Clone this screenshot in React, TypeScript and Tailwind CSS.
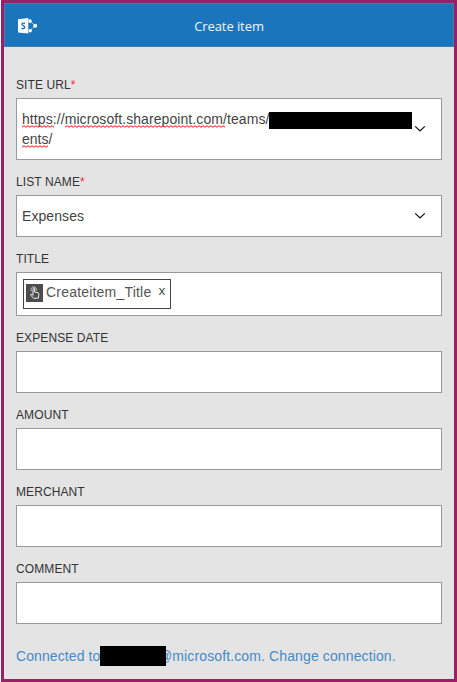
import type { ReactNode } from "react";

function SharePointIcon() {
  return (
    <svg width="20" height="16" viewBox="0 0 20 16" className="mt-px block">
      <path d="M11 2.6 L17.3 7.8 L11.5 13" fill="none" stroke="#fff" strokeWidth="1" strokeOpacity="0.8" strokeDasharray="2.2 0.8" />
      <circle cx="12" cy="3.1" r="1.8" fill="#fff" />
      <circle cx="17.2" cy="7.8" r="2" fill="#fff" />
      <circle cx="12.2" cy="12.7" r="1.7" fill="#fff" />
      <path d="M0 1.2 L10.3 0 V15.6 L0 14.4 Z" fill="#fff" />
      <path d="M7 5.5 C5.6 4.8 3.9 5 3.9 6.3 C3.9 7.8 6.8 7.6 6.8 9.3 C6.8 10.7 4.7 10.9 3.5 10.1" fill="none" stroke="#1b75bc" strokeWidth="1.4" />
    </svg>
  );
}

function Chevron() {
  return (
    <svg width="12" height="8" viewBox="0 0 12 8" className="block shrink-0">
      <path d="M1.2 1.4 L6 5.9 L10.8 1.4" fill="none" stroke="#111" strokeWidth="1.3" />
    </svg>
  );
}

function TapIcon() {
  return (
    <svg width="17" height="18" viewBox="0 0 17 18" className="mt-[-2px] block shrink-0 bg-[#4b4d4d]">
      <g fill="none" stroke="#fff" strokeWidth="0.9" strokeLinejoin="round" strokeLinecap="round">
        <path d="M7 11 V5 C7 3.9 8.6 3.9 8.6 5 V8 L12 8.8 C12.8 9 13 9.5 12.9 10.2 L12.3 14.2 H7.7 L4.6 11.2 C4.2 10.5 5 9.9 5.7 10.3 Z" />
        <path d="M5.3 6.8 C4.2 4.9 5.7 2.9 7.8 2.9 C9.7 2.9 11 4.8 10.2 6.5" strokeWidth="0.7" />
      </g>
    </svg>
  );
}

function Spell({ children, width }: { children: ReactNode; width: number }) {
  const points = Array.from({ length: Math.floor(width / 2) + 1 }, (_, i) => `${i * 2},${i % 2 ? 0.7 : 2.3}`).join(" ");
  return (
    <span className="relative inline-block">
      {children}
      <svg className="absolute left-0 top-[16px]" width={width} height="3">
        <polyline points={points} fill="none" stroke="#ee1010" strokeWidth="1" />
      </svg>
    </span>
  );
}

function Field({ label, required, className = "h-[42px]", children }: { label: string; required?: boolean; className?: string; children?: ReactNode }) {
  return (
    <div>
      <div className="h-[35px] pt-3 text-[12px] leading-5 tracking-[0.1px] text-[#333]">
        {label}
        {required && <span className="text-[#ff1f44]">*</span>}
      </div>
      <div className={`flex items-center justify-between border border-[#999] bg-white pl-[5px] text-[14px] leading-5 text-[#444] ${className}`}>{children}</div>
    </div>
  );
}

export default function App() {
  return (
    <div className="h-[682px] w-[457px] bg-white pl-px font-['Liberation_Sans',Arial,sans-serif]">
      <div className="h-full border-[3px] border-[#991f66] bg-[#e4e4e4]">
        <header className="grid h-11 grid-cols-[1fr_auto_1fr] items-center border border-[#4a7ba6] bg-[#1b75bc] pl-[13px] pr-[13px]">
          <SharePointIcon />
          <h1 className="pt-[2px] font-['Open_Sans','Noto_Sans',sans-serif] text-[13px] leading-5 tracking-[-0.08px] text-[#f0f6fb]">Create item</h1>
        </header>
        <main className="px-3 pt-4">
          <Field label="SITE URL" required className="h-[62px] pr-[15px]">
            <div className="w-[247px] shrink-0">
              <div className="flex items-center tracking-[0.08px]">
                <Spell width={32}>https</Spell>
                <span>://</span>
                <Spell width={160}>microsoft.sharepoint.com</Spell>
                <span>/teams/</span>
              </div>
              <Spell width={27}>ents</Spell>/
            </div>
            <div className="relative z-10 mr-auto mt-[-17px] h-[17px] w-[143px] shrink-0 bg-black" />
            <Chevron />
          </Field>
          <Field label="LIST NAME" required className="h-[42px] pr-[15px]">
            <span className="tracking-[0.08px]">Expenses</span>
            <Chevron />
          </Field>
          <Field label="TITLE" className="h-[44px]">
            <div className="ml-px flex h-[30px] w-[148px] items-center border border-[#444] pl-[2px]">
              <TapIcon />
              <span className="mt-[-4px] pl-[3px] tracking-[0.2px] text-[#555]">Createitem_Title</span>
              <span className="mt-[-9px] pl-[7px] font-['Open_Sans',sans-serif] text-[13px] text-[#444]">x</span>
            </div>
          </Field>
          <Field label="EXPENSE DATE" />
          <Field label="AMOUNT" />
          <Field label="MERCHANT" />
          <Field label="COMMENT" />
          <div className="mt-[22px] flex h-5 items-center whitespace-nowrap text-[14px] leading-5 text-[#428bca]">
            <span className="w-[84px] tracking-[0.1px]">Connected to</span>
            <span className="relative z-10 h-5 w-[66px] shrink-0 bg-black" />
            <span className="ml-[-8px] tracking-[0.12px]">@microsoft.com. Change connection.</span>
          </div>
        </main>
      </div>
    </div>
  );
}
